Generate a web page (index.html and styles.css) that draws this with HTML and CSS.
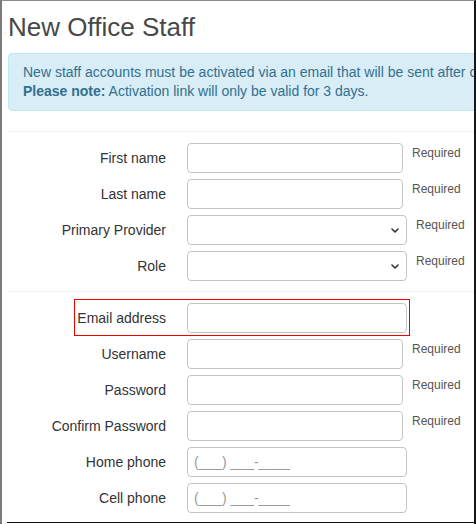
FILE: index.html
```html
<!DOCTYPE html>
<html>
<head>
<meta charset="utf-8">
<title>New Office Staff</title>
<link rel="stylesheet" href="styles.css">
</head>
<body>
<div class="frame">
  <h2 class="title">New Office Staff</h2>
  <div class="alert">
    <div>New staff accounts must be activated via an email that will be sent after creation.</div>
    <div><b>Please note:</b> Activation link will only be valid for 3 days.</div>
  </div>
  <hr class="sep sep-top">
  <div class="group">
    <div class="row">
      <label class="lbl">First name</label>
      <div class="ctl ctl-text"></div>
      <span class="req">Required</span>
    </div>
    <div class="row">
      <label class="lbl">Last name</label>
      <div class="ctl ctl-text"></div>
      <span class="req">Required</span>
    </div>
    <div class="row">
      <label class="lbl">Primary Provider</label>
      <div class="ctl ctl-wide ctl-select">
        <svg class="chev" width="8" height="5" viewBox="0 0 8 5"><path d="M1 1 L4 4 L7 1" fill="none" stroke="#333" stroke-width="1.6" stroke-linecap="round" stroke-linejoin="round"/></svg>
      </div>
      <span class="req">Required</span>
    </div>
    <div class="row">
      <label class="lbl">Role</label>
      <div class="ctl ctl-wide ctl-select">
        <svg class="chev" width="8" height="5" viewBox="0 0 8 5"><path d="M1 1 L4 4 L7 1" fill="none" stroke="#333" stroke-width="1.6" stroke-linecap="round" stroke-linejoin="round"/></svg>
      </div>
      <span class="req">Required</span>
    </div>
  </div>
  <hr class="sep sep-mid">
  <div class="group">
    <div class="row">
      <span class="mark"></span>
      <label class="lbl">Email address</label>
      <div class="ctl ctl-wide"></div>
    </div>
    <div class="row">
      <label class="lbl">Username</label>
      <div class="ctl ctl-text"></div>
      <span class="req">Required</span>
    </div>
    <div class="row">
      <label class="lbl">Password</label>
      <div class="ctl ctl-text"></div>
      <span class="req">Required</span>
    </div>
    <div class="row">
      <label class="lbl">Confirm Password</label>
      <div class="ctl ctl-text"></div>
      <span class="req">Required</span>
    </div>
    <div class="row">
      <label class="lbl">Home phone</label>
      <div class="ctl ctl-wide"><span class="ph">(___) ___-____</span></div>
    </div>
    <div class="row">
      <label class="lbl">Cell phone</label>
      <div class="ctl ctl-wide"><span class="ph">(___) ___-____</span></div>
    </div>
  </div>
  <div class="bottom-line"></div>
</div>
</body>
</html>
```

FILE: styles.css
```css
html, body {
  margin: 0;
  padding: 0;
  background: #fff;
}

body {
  font-family: "Liberation Sans", Arial, Helvetica, sans-serif;
  font-size: 14px;
  color: #333;
}

.frame {
  box-sizing: border-box;
  width: 476px;
  height: 524px;
  border-top: 1px solid #8a8a8a;
  border-left: 2px solid #7b7b7b;
  border-right: 2px solid #151515;
  padding-left: 6px;
  overflow: hidden;
  position: relative;
  display: flex;
  flex-direction: column;
}

.title {
  margin: 12px 0 11px;
  font-size: 26px;
  line-height: 29px;
  font-weight: normal;
  color: #484848;
  white-space: nowrap;
}

.alert {
  box-sizing: border-box;
  width: 560px;
  flex: none;
  background: #d9edf7;
  border: 1px solid #bce8f1;
  border-radius: 4px;
  color: #31708f;
  padding: 9px 14px 9px;
  line-height: 19px;
  white-space: nowrap;
}

.alert b {
  font-weight: bold;
}

.sep {
  border: 0;
  border-top: 1px solid #eee;
  width: 520px;
  margin: 0;
  flex: none;
}

.sep-top {
  margin-top: 20px;
  margin-bottom: 11px;
}

.sep-mid {
  margin-top: 10px;
  margin-bottom: 11px;
}

.group {
  display: flex;
  flex-direction: column;
  gap: 6px;
}

.row {
  display: flex;
  align-items: center;
  height: 30px;
  position: relative;
}

.lbl {
  width: 158px;
  flex: none;
  text-align: right;
  margin-right: 21px;
  color: #333;
}

.ctl {
  box-sizing: border-box;
  height: 30px;
  border: 1px solid #c4c4c4;
  border-radius: 4px;
  background: #fff;
  display: flex;
  align-items: center;
  flex: none;
}

.ctl-text {
  width: 216px;
}

.ctl-wide {
  width: 220px;
}

.ctl-select {
  justify-content: flex-end;
  padding-right: 7px;
}

.chev {
  display: block;
}

.req {
  align-self: flex-start;
  margin-left: 9px;
  margin-top: 2px;
  font-size: 12px;
  line-height: 16px;
  color: #555;
}

.ph {
  color: #9a9a9a;
  padding-left: 6px;
  font-size: 14px;
}

.mark {
  position: absolute;
  left: 66px;
  top: -4px;
  width: 336px;
  height: 37px;
  box-sizing: border-box;
  border: 1px solid rgb(238, 0, 0);
  background: transparent;
  pointer-events: none;
}

.bottom-line {
  position: absolute;
  left: 5px;
  right: 0;
  bottom: 1px;
  height: 1px;
  background: #111;
}
```
